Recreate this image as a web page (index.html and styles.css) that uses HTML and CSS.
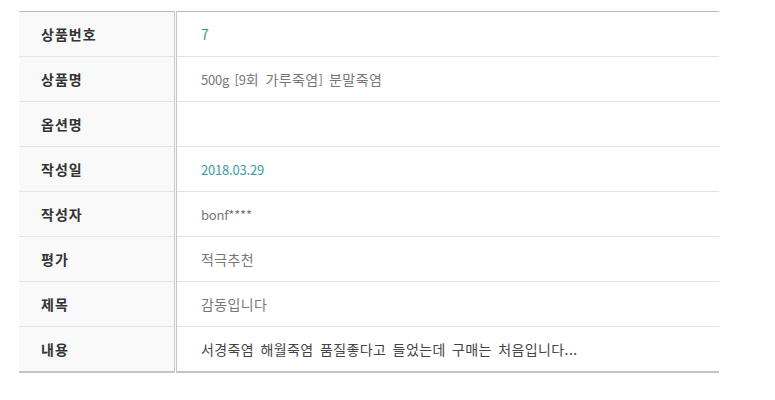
FILE: index.html
```html
<!DOCTYPE html>
<html lang="ko">
<head>
<meta charset="utf-8">
<link rel="stylesheet" href="styles.css">
</head>
<body>
<div class="wrap">
  <table class="info">
    <tr><th>상품번호</th><td class="accent">7</td></tr>
    <tr><th>상품명</th><td><span class="latin">500g [9</span>회 가루죽염<span class="latin">]</span> 분말죽염</td></tr>
    <tr><th>옵션명</th><td></td></tr>
    <tr><th>작성일</th><td class="accent latin">2018.03.29</td></tr>
    <tr><th>작성자</th><td class="latin">bonf****</td></tr>
    <tr><th>평가</th><td>적극추천</td></tr>
    <tr><th>제목</th><td>감동입니다</td></tr>
    <tr><th>내용</th><td class="dark">서경죽염 해월죽염 품질좋다고 들었는데 구매는 처음입니다...</td></tr>
  </table>
</div>
</body>
</html>
```

FILE: styles.css
```css
html, body {
  margin: 0;
  padding: 0;
  background: #fff;
}
.wrap {
  padding: 11px 0 0 19px;
}
.info {
  width: 700px;
  border-collapse: collapse;
  border-top: 1px solid #b9b9b9;
  border-bottom: 2px solid #c4c4c4;
  font-family: "Noto Sans CJK KR", "Noto Sans", sans-serif;
}
.info th, .info td {
  height: 44px;
  padding: 0;
  border-bottom: 1px solid #e3e3e3;
  vertical-align: middle;
  text-align: left;
}
.info tr:last-child th, .info tr:last-child td {
  border-bottom: none;
}
.info th {
  width: 133px;
  padding-left: 22px;
  background: #f9f9f9;
  border-right: 3px double #c9c9c9;
  font-size: 14px;
  font-weight: bold;
  letter-spacing: 1px;
  color: #333;
}
.info td {
  padding-left: 24px;
  font-size: 14px;
  letter-spacing: 0.4px;
  word-spacing: 2px;
  color: #777;
}
.info .latin {
  font-size: 13px;
  letter-spacing: -0.2px;
}
.info td.accent {
  color: #3a9a9e;
}
.info td.dark {
  color: #444;
}
```
